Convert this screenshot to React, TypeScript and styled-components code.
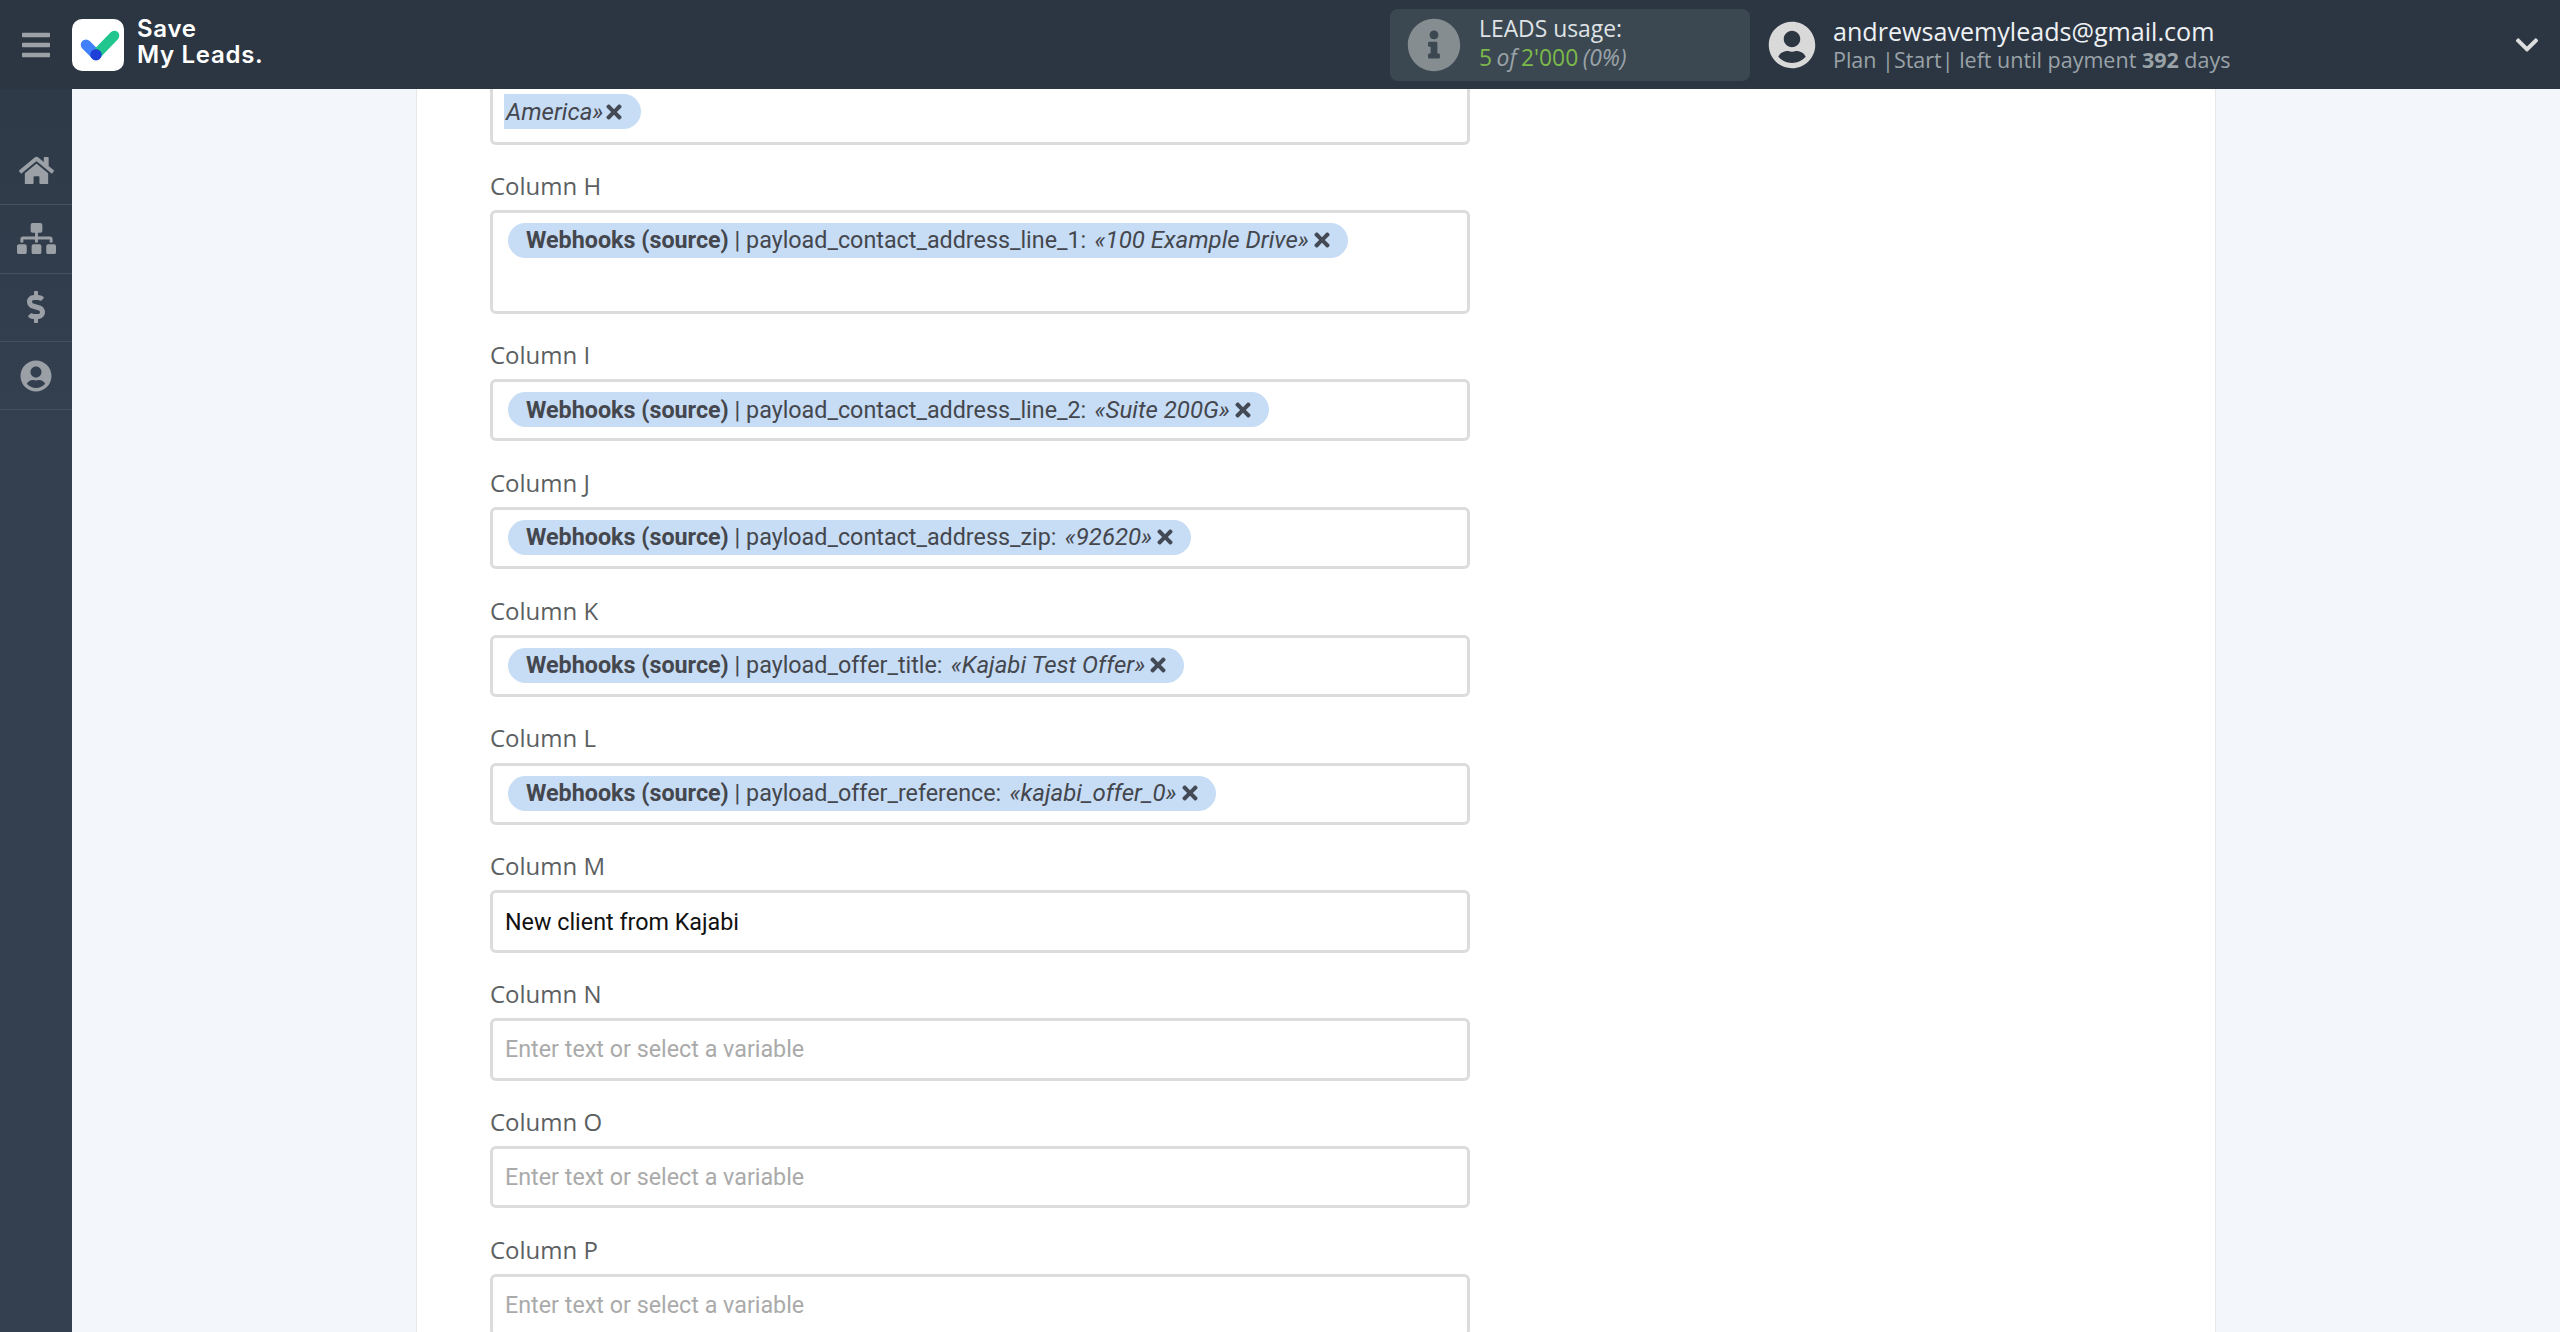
import React from "react";
import styled, { createGlobalStyle } from "styled-components";
import { FaBars, FaChevronDown, FaDollarSign, FaHome, FaInfoCircle, FaSitemap, FaTimes, FaUserCircle } from "react-icons/fa";

const Global = createGlobalStyle`
  * { box-sizing: border-box; }
  html, body { margin: 0; height: 100%; overflow: hidden; background: #f3f7fc; }
  body { font-family: "Open Sans", "Liberation Sans", sans-serif; }
  #root { height: 100%; }
`;

const Page = styled.div`
  height: 1332px;
  display: grid;
  grid-template-columns: 72px 1fr;
  grid-template-rows: 89px 1fr;
  overflow: hidden;
`;

const TopBar = styled.header`
  grid-column: 1 / 3;
  display: flex;
  align-items: center;
  background: #2c3643;
  color: #fff;
  padding-right: 20px;
`;

const Burger = styled.div`
  width: 72px;
  display: flex;
  justify-content: center;
  color: #9ca1a6;
`;

const Logo = styled.div`
  display: flex;
  align-items: center;
  gap: 13px;
  flex: 1;
`;

const LogoTile = styled.div`
  width: 52px;
  height: 52px;
  border-radius: 10px;
  background: #fff;
  display: flex;
`;

const LogoText = styled.div`
  font-family: Inter, "Noto Sans", sans-serif;
  font-weight: 600;
  font-size: 24px;
  line-height: 26.5px;
  color: #fff;
  letter-spacing: 0.7px;
  margin-top: -5px;
`;

const Usage = styled.div`
  width: 360px;
  height: 72px;
  border-radius: 8px;
  background: #3b4751;
  display: flex;
  align-items: center;
  padding-left: 17px;
  gap: 18px;
  margin-right: 18px;
  color: #868d91;
`;

const UsageText = styled.div`
  font-size: 22.86px;
  line-height: 29px;
  color: #dfe3e6;
  margin-top: -4px;
`;

const UsageLine = styled.div`
  color: #9aa3a8;
  font-style: italic;
  white-space: nowrap;
  word-spacing: -1.5px;
`;

const Green = styled.span`
  color: #7cb94a;
  font-style: normal;
`;

const Account = styled.div`
  display: flex;
  align-items: center;
  gap: 17px;
  flex: 0 0 auto;
  width: 772px;
  color: #d9d9d9;
`;

const AccountText = styled.div`
  flex: 1;
`;

const Email = styled.div`
  font-size: 25.1px;
  line-height: 31px;
  color: #eef1f4;
`;

const Plan = styled.div`
  font-size: 21.5px;
  line-height: 26px;
  color: #9aa3a8;
  white-space: nowrap;
  b { font-weight: 700; }
`;

const Side = styled.nav`
  background: linear-gradient(#2f3a48, #344050 30%);
  padding-top: 48px;
`;

const SideItem = styled.div`
  height: 68.3px;
  display: flex;
  align-items: center;
  justify-content: center;
  color: #9aa0a5;
  border-bottom: 1px solid #46515e;
`;

const Main = styled.main`
  display: flex;
  justify-content: center;
  overflow: hidden;
  min-height: 0;
`;

const Card = styled.section`
  width: 1800px;
  background: #fff;
  border-left: 1px solid #e6e9ec;
  border-right: 1px solid #e6e9ec;
  padding-left: 73px;
  height: 1243px;
  overflow: hidden;
`;

const Field = styled.div`
  width: 980px;
`;

const Label = styled.div`
  font-size: 24px;
  line-height: 31px;
  height: 65.45px;
  padding-top: 25.3px;
  color: #5c5f62;
`;

const Box = styled.div<{ $tall?: boolean }>`
  height: ${(p) => (p.$tall ? "103.7px" : "62.4px")};
  border: 3px solid #dcdcdc;
  border-radius: 6px;
  background: #fff;
  padding: 10px 15px;
`;

const ClippedBox = styled(Box)`
  height: 55.5px;
  border-top: 0;
  border-radius: 0 0 6px 6px;
  padding: 5px 11px;
`;

const Chip = styled.div<{ $tail?: boolean }>`
  display: inline-flex;
  align-items: center;
  height: 35px;
  padding: ${(p) => (p.$tail ? "0 16px 0 2px" : "0 15px 0 18px")};
  border-radius: ${(p) => (p.$tail ? "0 17.5px 17.5px 0" : "17.5px")};
  background: #c7dcf5;
  color: #44474d;
  font-family: Roboto, "Liberation Sans", sans-serif;
  font-size: 23.3px;
  white-space: pre;
  svg { margin-left: ${(p) => (p.$tail ? "0" : "2px")}; color: #444a55; }
  b { font-weight: 700; }
  i { font-style: italic; font-size: 24px; margin-left: ${(p) => (p.$tail ? "0" : "2.5px")}; }
`;

const TextInput = styled.input`
  display: block;
  width: 100%;
  height: 62.4px;
  border: 3px solid #dcdcdc;
  border-radius: 6px;
  padding: 0 12px;
  outline: 0;
  background: #fff;
  color: #111;
  font-family: Roboto, "Liberation Sans", sans-serif;
  font-size: 23.3px;
  &::placeholder { color: #aaaaaa; opacity: 1; }
`;

const LogoMark = () => (
  <svg width="52" height="52" viewBox="0 0 52 52" fill="none">
    <path d="M14 25.7 L24 35.7" stroke="#4080fb" strokeWidth="10.5" strokeLinecap="round" />
    <path d="M24 35.7 L42.3 16.7" stroke="#21c58e" strokeWidth="10" strokeLinecap="round" />
    <circle cx="24" cy="35.7" r="5.7" fill="#1f3fd6" />
  </svg>
);

const chips = [
  { name: "Column H", field: "payload_contact_address_line_1", value: "100 Example Drive", tall: true },
  { name: "Column I", field: "payload_contact_address_line_2", value: "Suite 200G" },
  { name: "Column J", field: "payload_contact_address_zip", value: "92620" },
  { name: "Column K", field: "payload_offer_title", value: "Kajabi Test Offer" },
  { name: "Column L", field: "payload_offer_reference", value: "kajabi_offer_0" },
];

const inputs = ["Column N", "Column O", "Column P"];

export default function App() {
  return (
    <Page>
      <Global />
      <TopBar>
        <Burger><FaBars size={32} /></Burger>
        <Logo>
          <LogoTile><LogoMark /></LogoTile>
          <LogoText>Save<br />My Leads.</LogoText>
        </Logo>
        <Usage>
          <FaInfoCircle size={54} />
          <UsageText>
            LEADS usage:
            <UsageLine><Green>5</Green> of <Green>2'000</Green> (0%)</UsageLine>
          </UsageText>
        </Usage>
        <Account>
          <FaUserCircle size={48} />
          <AccountText>
            <Email>andrewsavemyleads@gmail.com</Email>
            <Plan>Plan |Start| left until payment <b>392</b> days</Plan>
          </AccountText>
          <FaChevronDown size={26} color="#dddddd" />
        </Account>
      </TopBar>
      <Side>
        <SideItem><FaHome size={35} /></SideItem>
        <SideItem><FaSitemap size={39} /></SideItem>
        <SideItem><FaDollarSign size={32} /></SideItem>
        <SideItem><FaUserCircle size={32} /></SideItem>
      </Side>
      <Main>
        <Card>
          <Field>
            <ClippedBox>
              <Chip $tail><i>America»</i><FaTimes size={22} /></Chip>
            </ClippedBox>
          </Field>
          {chips.map((c) => (
            <Field key={c.name}>
              <Label>{c.name}</Label>
              <Box $tall={c.tall}>
                <Chip>
                  <b>Webhooks (source)</b> | {c.field}: <i>«{c.value}»</i>
                  <FaTimes size={22} />
                </Chip>
              </Box>
            </Field>
          ))}
          <Field>
            <Label>Column M</Label>
            <TextInput readOnly value="New client from Kajabi" />
          </Field>
          {inputs.map((n) => (
            <Field key={n}>
              <Label>{n}</Label>
              <TextInput readOnly placeholder="Enter text or select a variable" />
            </Field>
          ))}
        </Card>
      </Main>
    </Page>
  );
}
